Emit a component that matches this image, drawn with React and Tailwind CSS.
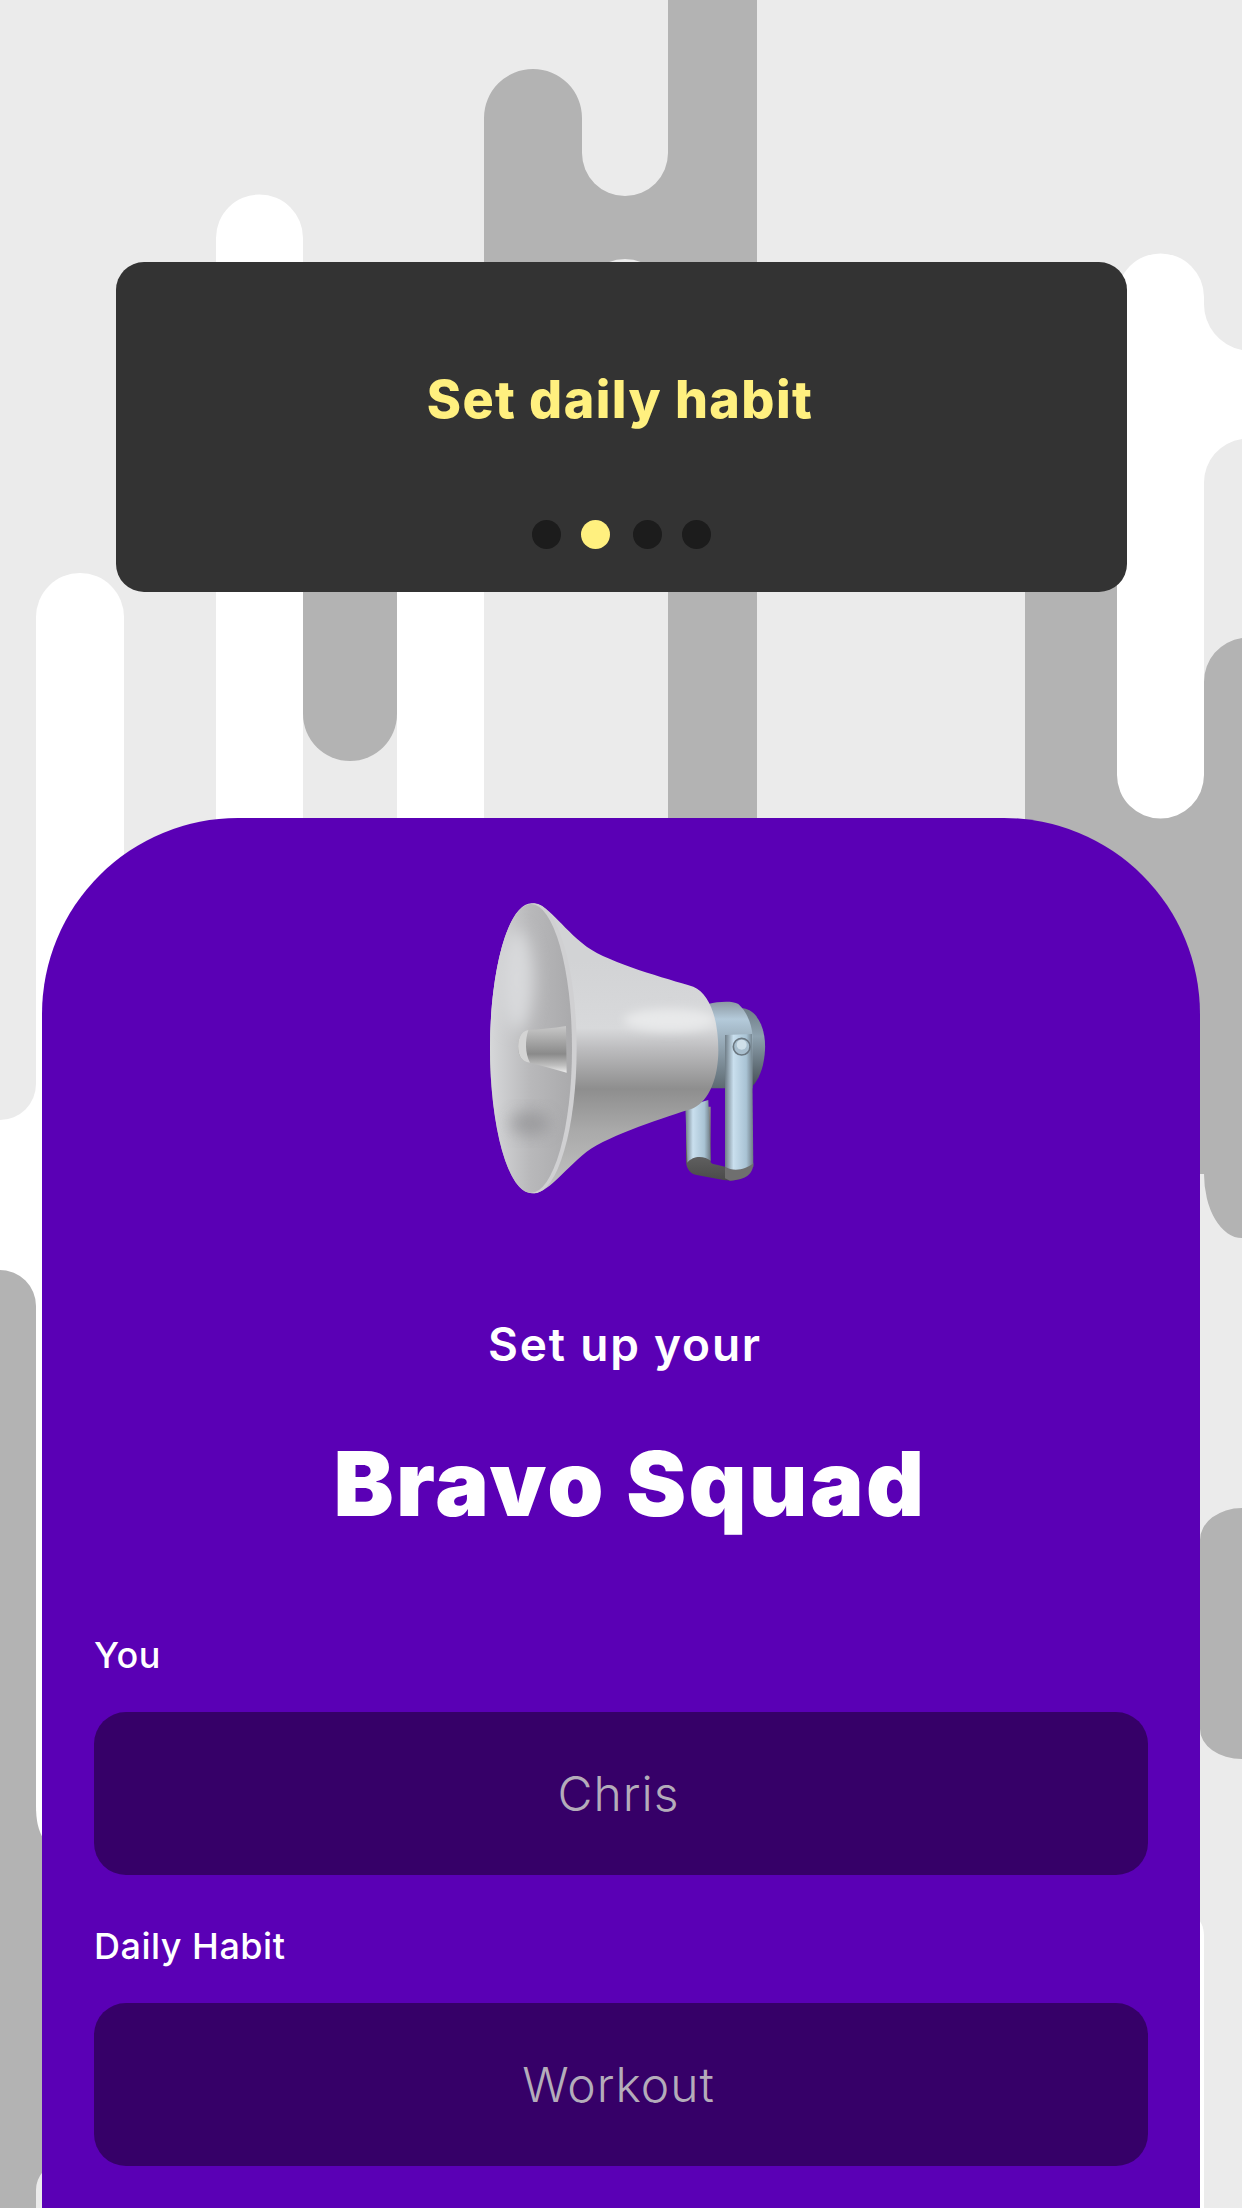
const GRAY = "#b3b3b3";
const LIGHT = "#ebebeb";

// the capsule pattern behind the cards
const Backdrop = () => (
  <svg
    className="absolute inset-0"
    width="1242"
    height="2208"
    viewBox="0 0 1242 2208"
  >
    <rect width="1242" height="2208" fill={LIGHT} />
    {/* left edge */}
    <rect x="0" y="1060" width="60" height="300" fill="#fff" />
    <path d="M0 1040H36V1084A36 36 0 0 1 0 1120Z" fill={LIGHT} />
    <path d="M0 2208V1270A36 36 0 0 1 36 1306V1800H60V2208Z" fill={GRAY} />
    <path d="M36 2208V2190A22 25 0 0 1 60 2165V2208Z" fill={LIGHT} />
    <path d="M36 1806V617A44 44 0 0 1 124 617V1840H44C38 1830 36 1820 36 1806Z" fill="#fff" />
    {/* middle columns */}
    <path d="M216 900V238A43.5 43.5 0 0 1 303 238V900Z" fill="#fff" />
    <path d="M303 300H397V714A47 47 0 0 1 303 714Z" fill={GRAY} />
    <rect x="397" y="500" width="87" height="400" fill="#fff" />
    <path
      d="M484 340V118A49 49 0 0 1 582 118V153A43 43 0 0 0 668 153V0H757V900H668V302A43 43 0 0 0 582 302V340Z"
      fill={GRAY}
    />
    {/* right side */}
    <path d="M1025 400H1242V1238A38 64 0 0 1 1204 1174H1025Z" fill={GRAY} />
    <path
      d="M1117 775V297A43.5 43.5 0 0 1 1204 297V303A47 47 0 0 0 1242 350V500H1204V775A43.5 43.5 0 0 1 1117 775Z"
      fill="#fff"
    />
    <path d="M1204 483A44 44 0 0 1 1242 439V720H1204Z" fill={LIGHT} />
    <path d="M1204 682A44 44 0 0 1 1242 638V760H1204Z" fill={GRAY} />
    <path
      d="M1200 2208V1540A42 32 0 0 1 1242 1508V1759A42 30 0 0 1 1200 1729Z"
      fill={GRAY}
    />
    <path d="M1195 2208V1916C1200 1920 1204 1926 1204 1936V2208Z" fill="#fff" />
  </svg>
);

const BELL =
  "M215 70C265 70 300 140 380 200C450 250 620 295 700 320C750 340 775 420 775 510C775 590 750 660 700 685C620 710 450 765 380 815C300 880 265 940 215 940C140 940 90 720 90 505C90 290 140 70 215 70Z";

const Megaphone = () => (
  <svg width="330" height="320" viewBox="0 0 990 960" className="ml-[418px] shrink-0">
    <defs>
      <linearGradient id="bell" x1="0" y1="0" x2="0" y2="1">
        <stop offset="0.2" stopColor="#d2d3d5" />
        <stop offset="0.43" stopColor="#d8d9db" />
        <stop offset="0.5" stopColor="#bdbdbf" />
        <stop offset="0.64" stopColor="#8e8e8e" />
        <stop offset="0.78" stopColor="#a9a9a9" />
        <stop offset="1" stopColor="#c4c4c4" />
      </linearGradient>
      <linearGradient id="mouth" x1="0" y1="0" x2="1" y2="0">
        <stop offset="0" stopColor="#d6d7d9" />
        <stop offset="0.5" stopColor="#b8b8ba" />
        <stop offset="1" stopColor="#aaaaac" />
      </linearGradient>
      <linearGradient id="stub" x1="0" y1="0" x2="0" y2="1">
        <stop offset="0" stopColor="#c8c8c8" />
        <stop offset="0.6" stopColor="#8a8a8a" />
        <stop offset="0.85" stopColor="#c0c0c0" />
        <stop offset="1" stopColor="#ececec" />
      </linearGradient>
      <linearGradient id="arm" x1="0" y1="0" x2="1" y2="0">
        <stop offset="0" stopColor="#6f7d87" />
        <stop offset="0.3" stopColor="#c9dfee" />
        <stop offset="0.75" stopColor="#a9c3d4" />
        <stop offset="1" stopColor="#6d7a83" />
      </linearGradient>
      <linearGradient id="collar" x1="0" y1="0" x2="0" y2="1">
        <stop offset="0" stopColor="#8d9aa3" />
        <stop offset="0.2" stopColor="#b4cada" />
        <stop offset="1" stopColor="#5d6a72" />
      </linearGradient>
      <linearGradient id="cap" x1="0" y1="0" x2="0" y2="1">
        <stop offset="0" stopColor="#6e7c85" />
        <stop offset="0.35" stopColor="#8fa2af" />
        <stop offset="1" stopColor="#434c52" />
      </linearGradient>
      <linearGradient id="foot" x1="0" y1="0" x2="0" y2="1">
        <stop offset="0" stopColor="#8c8c8c" />
        <stop offset="1" stopColor="#4a4a4a" />
      </linearGradient>
      <filter id="soft" x="-50%" y="-50%" width="200%" height="200%">
        <feGaussianBlur stdDeviation="14" />
      </filter>
      <filter id="softer" x="-50%" y="-50%" width="200%" height="200%">
        <feGaussianBlur stdDeviation="24" />
      </filter>
      <clipPath id="bellClip">
        <path d={BELL} />
      </clipPath>
    </defs>
    {/* back cap and collar */}
    <path d="M850 385C895 392 918 450 915 510C912 565 895 605 870 625H800V385Z" fill="url(#cap)" />
    <path d="M745 372C775 365 815 362 835 372C860 395 875 430 878 470V625H745Z" fill="url(#collar)" />
    {/* handle */}
    <path d="M678 680H752V845C752 850 760 852 770 854L795 860V880L870 870C860 895 830 905 790 900L710 885C685 880 678 860 678 840Z" fill="url(#foot)" />
    <path d="M676 680L745 660L752 842C735 828 700 824 682 848Z" fill="url(#arm)" />
    <path d="M795 465L876 462L880 860C860 872 820 882 795 862Z" fill="url(#arm)" />
    <path d="M795 860C820 876 855 870 880 850C880 880 860 900 810 902L795 895Z" fill="#6f6f6f" />
    <circle cx="845" cy="500" r="25" fill="#a9bfce" stroke="#6b7780" strokeWidth="5" />
    <circle cx="845" cy="494" r="15" fill="#cfdfe9" />
    {/* bell */}
    <path d={BELL} fill="url(#bell)" />
    <g clipPath="url(#bellClip)">
      <ellipse cx="630" cy="420" rx="140" ry="34" fill="#e8e9ea" filter="url(#soft)" />
    </g>
    {/* mouth */}
    <ellipse cx="222" cy="505" rx="128" ry="435" fill="#d0d0d2" />
    <ellipse cx="213" cy="505" rx="123" ry="433" fill="url(#mouth)" />
    <g clipPath="url(#bellClip)">
      <ellipse cx="210" cy="730" rx="60" ry="36" fill="#8f8f92" filter="url(#softer)" opacity="0.7" />
      <ellipse cx="170" cy="300" rx="50" ry="150" fill="#d8d9db" filter="url(#softer)" />
    </g>
    {/* inner stub */}
    <path d="M318 438C280 445 240 448 205 450C182 452 172 480 175 510C178 535 190 545 210 548C250 558 285 568 320 578Z" fill="url(#stub)" />
    <path d="M205 450C182 452 172 480 175 510C178 535 190 545 210 548C195 520 195 480 205 450Z" fill="#d4d4d4" />
  </svg>
);

const Field = ({ label, placeholder, className }) => (
  <div className={className}>
    <label className="block text-[36px] leading-[44px] font-medium tracking-[0.5px] text-white">
      {label}
    </label>
    <input
      readOnly
      placeholder={placeholder}
      className="mt-[35px] block h-[163px] w-[1054px] rounded-[32px] bg-[#360068] pr-[5px] text-center text-[48px] font-light tracking-[1px] text-white placeholder:text-[#b4acba] outline-none"
    />
  </div>
);

export default function App() {
  return (
    <div className="relative h-[2208px] w-[1242px] overflow-hidden font-['Inter',sans-serif]">
      <Backdrop />
      <div className="relative flex h-full flex-col">
        <div className="ml-[116px] mt-[262px] flex h-[330px] w-[1011px] shrink-0 flex-col items-center rounded-[28px] bg-[#333333]">
          <h2 className="mt-[108px] pr-[3px] text-[52px] leading-[60px] font-extrabold tracking-[1.4px] text-[#fff07f]">
            Set daily habit
          </h2>
          <div className="mt-[90px] flex items-center gap-[20px]">
            <span className="h-[29px] w-[29px] rounded-full bg-[#1c1c1c]" />
            <span className="h-[29px] w-[29px] rounded-full bg-[#fff07f]" />
            <span className="ml-[3px] h-[29px] w-[29px] rounded-full bg-[#1c1c1c]" />
            <span className="h-[29px] w-[29px] rounded-full bg-[#1c1c1c]" />
          </div>
        </div>
        <div className="ml-[42px] mt-[226px] flex min-h-0 w-[1158px] flex-1 flex-col overflow-hidden rounded-t-[196px] bg-[#5a00b5]">
          <div className="mt-[62px]">
            <Megaphone />
          </div>
          <p className="mt-[114px] pl-[8px] text-center text-[46px] leading-[60px] font-semibold tracking-[1.8px] text-white">
            Set up your
          </p>
          <h1 className="mt-[55px] pl-[18px] text-center text-[90px] leading-[110px] font-black tracking-[2.4px] text-white">
            Bravo Squad
          </h1>
          <Field label="You" placeholder="Chris" className="ml-[52px] mt-[94px]" />
          <Field label="Daily Habit" placeholder="Workout" className="ml-[52px] mt-[49px]" />
        </div>
      </div>
    </div>
  );
}
